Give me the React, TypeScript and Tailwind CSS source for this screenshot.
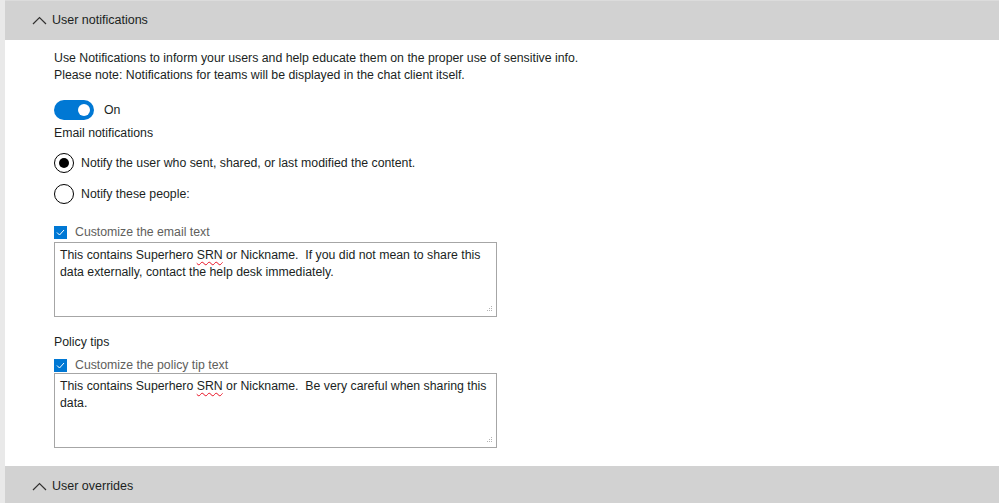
import React from "react";

const Chevron = () => (
  <svg width="15" height="9" viewBox="0 0 15 9" className="shrink-0">
    <path d="M1 8 L7.5 1.5 L14 8" fill="none" stroke="#323130" strokeWidth="1.2" />
  </svg>
);

const Squiggle = ({ children }: { children: React.ReactNode }) => (
  <span className="underline decoration-wavy decoration-[#e81123] decoration-1 underline-offset-2">{children}</span>
);

const Resize = () => (
  <svg width="7" height="7" viewBox="0 0 7 7" className="absolute right-[3px] bottom-[3px]">
    <g fill="#b3b3b3">
      <rect x="5" y="0" width="1" height="1" />
      <rect x="3" y="2" width="1" height="1" />
      <rect x="5" y="2" width="1" height="1" />
      <rect x="1" y="4" width="1" height="1" />
      <rect x="3" y="4" width="1" height="1" />
      <rect x="5" y="4" width="1" height="1" />
    </g>
  </svg>
);

const Check = () => (
  <div className="w-[13px] h-[13px] bg-[#0078d4] flex items-center justify-center shrink-0">
    <svg width="9" height="7" viewBox="0 0 9 7">
      <path d="M1 3.5 L3.5 6 L8 1" fill="none" stroke="white" strokeWidth="1" />
    </svg>
  </div>
);

export default function App() {
  return (
    <div
      className="w-[999px] h-[503px] bg-[#e6e6e6] flex overflow-hidden text-[12.3px] text-[#201f1e]"
      style={{ fontFamily: '"Liberation Sans", Arial, sans-serif' }}
    >
      <div className="w-[5px] shrink-0 bg-[#e9e9e9]" />
      <div className="flex-1 flex flex-col">
        <div className="h-[40px] bg-[#d2d2d2] border-t border-[#dcdcdc] flex items-center pl-[27px] gap-[5px] shrink-0">
          <Chevron />
          <span className="text-[12.5px]">User notifications</span>
        </div>
        <div className="flex-1 bg-white pl-[49px] pt-[10px]">
          <p className="leading-[17px]">Use Notifications to inform your users and help educate them on the proper use of sensitive info.</p>
          <p className="leading-[17px]">Please note: Notifications for teams will be displayed in the chat client itself.</p>
          <div className="flex items-center gap-[10px] mt-[16px] h-[20px]">
            <div className="w-[40px] h-[20px] rounded-full bg-[#0078d4] flex items-center justify-end pr-[4px]">
              <div className="w-[12px] h-[12px] rounded-full bg-white" />
            </div>
            <span>On</span>
          </div>
          <p className="mt-[5px] leading-[17px]">Email notifications</p>
          <div className="flex items-center gap-[7px] mt-[11px] h-[20px]">
            <div className="w-[20px] h-[20px] rounded-full border border-black flex items-center justify-center">
              <div className="w-[10px] h-[10px] rounded-full bg-black" />
            </div>
            <span>Notify the user who sent, shared, or last modified the content.</span>
          </div>
          <div className="flex items-center gap-[7px] mt-[11px] h-[20px]">
            <div className="w-[20px] h-[20px] rounded-full border border-black" />
            <span>Notify these people:</span>
          </div>
          <div className="flex items-center gap-[8px] mt-[21px] h-[15px]">
            <Check />
            <span className="text-[#605e5c]">Customize the email text</span>
          </div>
          <div className="relative mt-[2px] w-[443px] h-[75px] border border-[#a6a6a6] px-[5px] pt-[4px] leading-[17px]">
            This contains Superhero <Squiggle>SRN</Squiggle> or Nickname.&nbsp; If you did not mean to share this data externally, contact the help desk immediately.
            <Resize />
          </div>
          <p className="mt-[17px] leading-[17px]">Policy tips</p>
          <div className="flex items-center gap-[8px] mt-[7px] h-[15px]">
            <Check />
            <span className="text-[#605e5c]">Customize the policy tip text</span>
          </div>
          <div className="relative w-[443px] h-[75px] border border-[#a6a6a6] px-[5px] pt-[4px] leading-[17px]">
            This contains Superhero <Squiggle>SRN</Squiggle> or Nickname.&nbsp; Be very careful when sharing this data.
            <Resize />
          </div>
        </div>
        <div className="h-[37px] bg-[#d2d2d2] flex items-center pl-[27px] pt-[3px] gap-[5px] shrink-0">
          <Chevron />
          <span className="text-[12.5px]">User overrides</span>
        </div>
      </div>
    </div>
  );
}
